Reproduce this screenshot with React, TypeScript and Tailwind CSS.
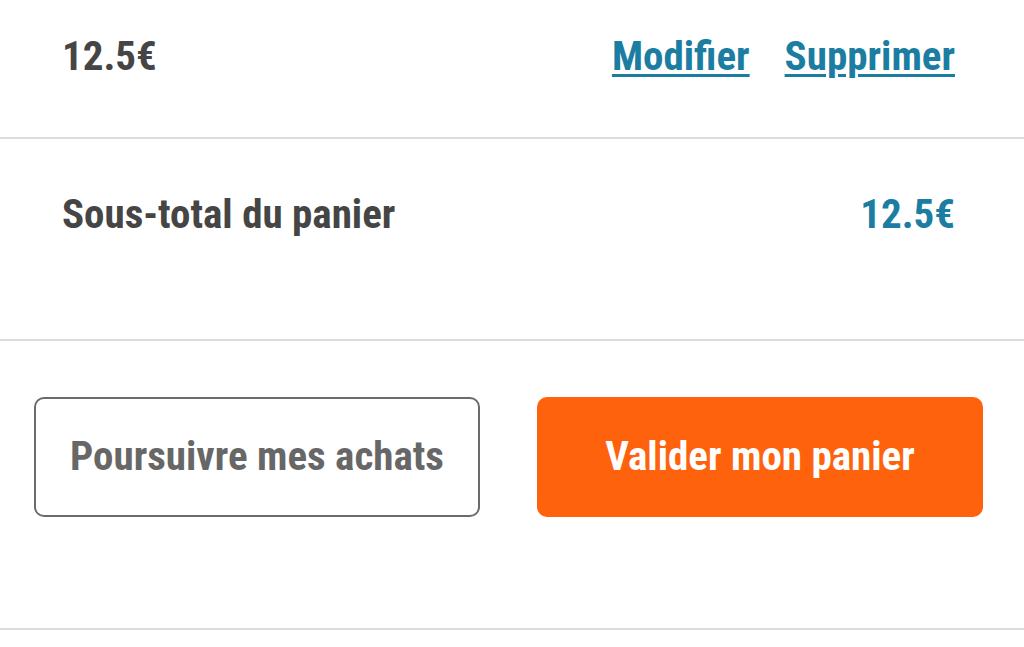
import React from "react";

const font = { fontFamily: '"Roboto Condensed", "Liberation Sans Narrow", "DejaVu Sans Condensed", Roboto, sans-serif' };

export default function App() {
  return (
    <div className="w-[1024px] h-[647px] bg-white overflow-hidden" style={font}>
      <div className="h-[139px] flex items-start justify-between pl-[62px] pr-[69px] pt-[32px] border-b-2 border-[#dcdcdc]">
        <span className="text-[41px] leading-[48px] font-bold text-[#454545]">12.5€</span>
        <div className="flex gap-[35px]">
          <a href="#" className="text-[41px] leading-[48px] font-bold text-[#1a7da1] underline underline-offset-[4px] decoration-[3px]">Modifier</a>
          <a href="#" className="text-[41px] leading-[48px] font-bold text-[#1a7da1] underline underline-offset-[4px] decoration-[3px]">Supprimer</a>
        </div>
      </div>
      <div className="h-[202px] flex items-start justify-between pl-[62px] pr-[69px] pt-[51px] border-b-2 border-[#dcdcdc]">
        <span className="text-[41px] leading-[48px] font-bold text-[#454545]">Sous-total du panier</span>
        <span className="text-[41px] leading-[48px] font-bold text-[#1a7da1]">12.5€</span>
      </div>
      <div className="h-[289px] pl-[34px] pr-[41px] pt-[56px] border-b-2 border-[#dcdcdc]">
        <div className="grid grid-cols-2 gap-[57px]">
          <button className="h-[120px] rounded-[10px] border-2 border-[#6b6b6b] bg-white text-[41px] font-bold text-[#676767] flex items-center justify-center">
            Poursuivre mes achats
          </button>
          <button className="h-[120px] rounded-[10px] bg-[#ff620d] text-[41px] font-bold text-white flex items-center justify-center">
            Valider mon panier
          </button>
        </div>
      </div>
    </div>
  );
}
